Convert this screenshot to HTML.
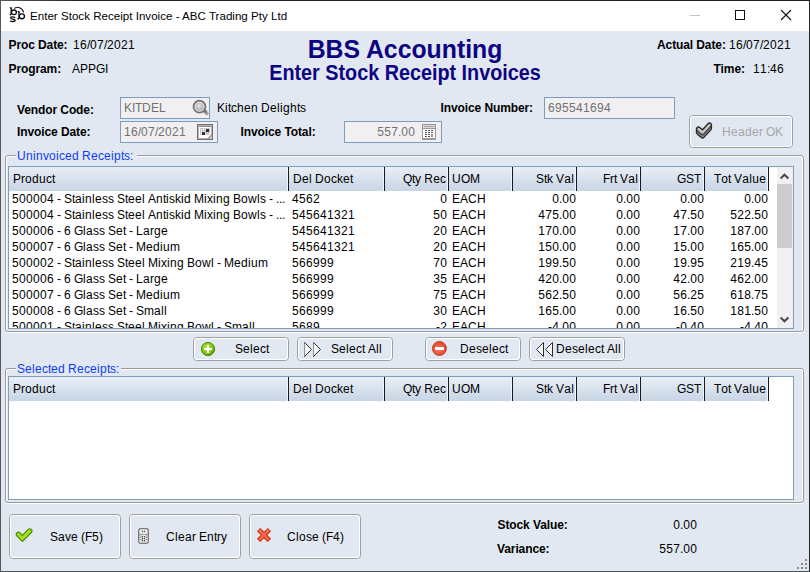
<!DOCTYPE html>
<html><head><meta charset="utf-8">
<style>
html,body{margin:0;padding:0;}
body{width:810px;height:572px;overflow:hidden;position:relative;background:#E2E8F1;font-family:"Liberation Sans",sans-serif;font-size:12px;color:#000;}
.a{position:absolute;white-space:pre;line-height:14px;}
i{font-style:normal;display:inline-block;}
.w1{width:1px}.w2{width:2px}.w3{width:3px}.w4{width:4px}.w5{width:5px}.w6{width:6px}.w7{width:7px}.w8{width:8px}.w9{width:9px}.w10{width:10px}.w11{width:11px}.w12{width:12px}.w13{width:13px}.w14{width:14px}.w15{width:15px}
</style></head><body>
<div style="position:absolute;left:1px;top:1px;width:808px;height:30px;background:#fff"></div>
<div style="position:absolute;left:0px;top:0px;width:810px;height:1px;background:linear-gradient(90deg,#5a5a5a,#222 10%,#1e1e1e)"></div>
<div style="position:absolute;left:0px;top:571px;width:810px;height:1px;background:#505050"></div>
<div style="position:absolute;left:0px;top:0px;width:1px;height:572px;background:#585858"></div>
<div style="position:absolute;left:809px;top:0px;width:1px;height:572px;background:#262626"></div>
<div class="a" style="left:30px;top:9px;font-size:11.6px;">Enter Stock Receipt Invoice - ABC Trading Pty Ltd</div>
<div style="position:absolute;left:690px;top:15px;width:10px;height:1px;background:#c4c4c4"></div>
<div style="position:absolute;left:735px;top:10px;width:10px;height:10px;border:1px solid #111;box-sizing:border-box"></div>
<div class="a" style="left:8.5px;top:38px;font-weight:bold;letter-spacing:-0.1px;">Proc Date:</div>
<div class="a" style="left:73px;top:38px;"><i class="w7">1</i><i class="w7">6</i><i class="w3">/</i><i class="w7">0</i><i class="w7">7</i><i class="w3">/</i><i class="w7">2</i><i class="w7">0</i><i class="w7">2</i><i class="w7">1</i></div>
<div class="a" style="left:8.5px;top:62px;font-weight:bold;letter-spacing:-0.1px;">Program:</div>
<div class="a" style="left:72px;top:62px;"><i class="w8">A</i><i class="w8">P</i><i class="w8">P</i><i class="w9">G</i><i class="w3">I</i></div>
<div class="a" style="left:0;width:810px;text-align:center;top:35px;font-size:24.8px;line-height:30px;font-weight:bold;color:#0C0482;transform:scaleY(1.06);transform-origin:50% 23px">BBS Accounting</div>
<div class="a" style="left:0;width:810px;text-align:center;top:61px;font-size:19.8px;line-height:24px;font-weight:bold;color:#0C0482;transform:scaleY(1.07);transform-origin:50% 19px">Enter Stock Receipt Invoices</div>
<div class="a" style="left:657px;top:38px;font-weight:bold;letter-spacing:-0.1px;">Actual Date:</div>
<div class="a" style="left:729px;top:38px;"><i class="w7">1</i><i class="w7">6</i><i class="w3">/</i><i class="w7">0</i><i class="w7">7</i><i class="w3">/</i><i class="w7">2</i><i class="w7">0</i><i class="w7">2</i><i class="w7">1</i></div>
<div class="a" style="left:713.6px;top:62px;font-weight:bold;letter-spacing:-0.1px;">Time:</div>
<div class="a" style="left:753px;top:62px;"><i class="w7">1</i><i class="w7">1</i><i class="w3">:</i><i class="w7">4</i><i class="w7">6</i></div>
<div class="a" style="left:17px;top:103px;font-weight:bold;letter-spacing:-0.1px;">Vendor Code:</div>
<div style="position:absolute;left:120px;top:97px;width:90px;height:22px;background:#F0F0F0;border:1px solid #7F9DB9;box-sizing:border-box"></div>
<div class="a" style="left:124px;top:101px;color:#707070;"><i class="w8">K</i><i class="w3">I</i><i class="w7">T</i><i class="w9">D</i><i class="w8">E</i><i class="w7">L</i></div>
<div class="a" style="left:217px;top:101px;"><i class="w8">K</i><i class="w3">i</i><i class="w3">t</i><i class="w6">c</i><i class="w7">h</i><i class="w7">e</i><i class="w7">n</i><i class="w3"> </i><i class="w9">D</i><i class="w7">e</i><i class="w3">l</i><i class="w3">i</i><i class="w7">g</i><i class="w7">h</i><i class="w3">t</i><i class="w6">s</i></div>
<div class="a" style="left:440.5px;top:101px;font-weight:bold;letter-spacing:-0.1px;">Invoice Number:</div>
<div style="position:absolute;left:544px;top:97px;width:131px;height:22px;background:#F0F0F0;border:1px solid #7F9DB9;box-sizing:border-box"></div>
<div class="a" style="left:548px;top:101px;color:#707070;"><i class="w7">6</i><i class="w7">9</i><i class="w7">5</i><i class="w7">5</i><i class="w7">4</i><i class="w7">1</i><i class="w7">6</i><i class="w7">9</i><i class="w7">4</i></div>
<div class="a" style="left:17px;top:125px;font-weight:bold;letter-spacing:-0.1px;">Invoice Date:</div>
<div style="position:absolute;left:120px;top:121px;width:98px;height:22px;background:#F0F0F0;border:1px solid #7F9DB9;box-sizing:border-box"></div>
<div class="a" style="left:124px;top:125px;color:#707070;"><i class="w7">1</i><i class="w7">6</i><i class="w3">/</i><i class="w7">0</i><i class="w7">7</i><i class="w3">/</i><i class="w7">2</i><i class="w7">0</i><i class="w7">2</i><i class="w7">1</i></div>
<div class="a" style="left:240.5px;top:125px;font-weight:bold;letter-spacing:-0.1px;">Invoice Total:</div>
<div style="position:absolute;left:344px;top:121px;width:98px;height:22px;background:#F0F0F0;border:1px solid #7F9DB9;box-sizing:border-box"></div>
<div class="a" style="right:395px;top:125px;text-align:right;color:#707070;"><i class="w7">5</i><i class="w7">5</i><i class="w7">7</i><i class="w3">.</i><i class="w7">0</i><i class="w7">0</i></div>
<div style="position:absolute;left:689px;top:115px;width:104px;height:33px;border:1px solid #A0A0A0;border-radius:4px;box-sizing:border-box"></div>
<div style="position:absolute;left:690px;top:116px;width:102px;height:31px;border:1px solid #FFFFFF;border-radius:3px;box-sizing:border-box"></div>
<div class="a" style="left:722px;top:125px;color:#A6A6A6;"><i class="w9">H</i><i class="w7">e</i><i class="w7">a</i><i class="w7">d</i><i class="w7">e</i><i class="w4">r</i><i class="w3"> </i><i class="w9">O</i><i class="w8">K</i></div>
<div style="position:absolute;left:5px;top:155px;width:799px;height:177px;border:1px solid #9A9A9A;border-radius:3px;box-sizing:border-box"></div>
<div style="position:absolute;left:6px;top:157px;width:1px;height:173px;background:#fff"></div>
<div style="position:absolute;left:7px;top:156px;width:795px;height:1px;background:#fff"></div>
<div style="position:absolute;left:802px;top:157px;width:1px;height:173px;background:#fff"></div>
<div style="position:absolute;left:7px;top:332px;width:796px;height:1px;background:#fff"></div>
<div style="position:absolute;left:16px;top:154px;width:121px;height:3px;background:#E2E8F1"></div>
<div class="a" style="left:17px;top:149px;color:#0F3CF0;"><i class="w9">U</i><i class="w7">n</i><i class="w3">i</i><i class="w7">n</i><i class="w6">v</i><i class="w7">o</i><i class="w3">i</i><i class="w6">c</i><i class="w7">e</i><i class="w7">d</i><i class="w3"> </i><i class="w9">R</i><i class="w7">e</i><i class="w6">c</i><i class="w7">e</i><i class="w3">i</i><i class="w7">p</i><i class="w3">t</i><i class="w6">s</i><i class="w3">:</i></div>
<div style="position:absolute;left:5px;top:368px;width:799px;height:135px;border:1px solid #9A9A9A;border-radius:3px;box-sizing:border-box"></div>
<div style="position:absolute;left:6px;top:370px;width:1px;height:131px;background:#fff"></div>
<div style="position:absolute;left:7px;top:369px;width:795px;height:1px;background:#fff"></div>
<div style="position:absolute;left:802px;top:370px;width:1px;height:131px;background:#fff"></div>
<div style="position:absolute;left:7px;top:503px;width:796px;height:1px;background:#fff"></div>
<div style="position:absolute;left:16px;top:367px;width:105px;height:3px;background:#E2E8F1"></div>
<div class="a" style="left:17px;top:362px;color:#0F3CF0;"><i class="w8">S</i><i class="w7">e</i><i class="w3">l</i><i class="w7">e</i><i class="w6">c</i><i class="w3">t</i><i class="w7">e</i><i class="w7">d</i><i class="w3"> </i><i class="w9">R</i><i class="w7">e</i><i class="w6">c</i><i class="w7">e</i><i class="w3">i</i><i class="w7">p</i><i class="w3">t</i><i class="w6">s</i><i class="w3">:</i></div>
<div style="position:absolute;left:8px;top:166px;width:786px;height:163px;background:#fff;border:1px solid #7F9DB9;box-sizing:border-box"></div>
<div style="position:absolute;left:9px;top:167px;width:768px;height:161px;overflow:hidden">
<div style="position:absolute;left:-9px;top:-167px;width:810px;height:572px">
<div style="position:absolute;left:9px;top:167px;width:760px;height:24px;background:linear-gradient(#E9EEF5,#C7D5E6)"></div>
<div style="position:absolute;left:287px;top:167px;width:1px;height:24px;background:#F2F5FA"></div>
<div style="position:absolute;left:288px;top:167px;width:1px;height:24px;background:#1a1a1a"></div>
<div style="position:absolute;left:383px;top:167px;width:1px;height:24px;background:#F2F5FA"></div>
<div style="position:absolute;left:384px;top:167px;width:1px;height:24px;background:#1a1a1a"></div>
<div style="position:absolute;left:447px;top:167px;width:1px;height:24px;background:#F2F5FA"></div>
<div style="position:absolute;left:448px;top:167px;width:1px;height:24px;background:#1a1a1a"></div>
<div style="position:absolute;left:511px;top:167px;width:1px;height:24px;background:#F2F5FA"></div>
<div style="position:absolute;left:512px;top:167px;width:1px;height:24px;background:#1a1a1a"></div>
<div style="position:absolute;left:575px;top:167px;width:1px;height:24px;background:#F2F5FA"></div>
<div style="position:absolute;left:576px;top:167px;width:1px;height:24px;background:#1a1a1a"></div>
<div style="position:absolute;left:639px;top:167px;width:1px;height:24px;background:#F2F5FA"></div>
<div style="position:absolute;left:640px;top:167px;width:1px;height:24px;background:#1a1a1a"></div>
<div style="position:absolute;left:703px;top:167px;width:1px;height:24px;background:#F2F5FA"></div>
<div style="position:absolute;left:704px;top:167px;width:1px;height:24px;background:#1a1a1a"></div>
<div style="position:absolute;left:767px;top:167px;width:1px;height:24px;background:#F2F5FA"></div>
<div style="position:absolute;left:768px;top:167px;width:1px;height:24px;background:#1a1a1a"></div>
<div class="a" style="left:13px;top:172px;"><i class="w8">P</i><i class="w4">r</i><i class="w7">o</i><i class="w7">d</i><i class="w7">u</i><i class="w6">c</i><i class="w3">t</i></div>
<div class="a" style="left:293px;top:172px;"><i class="w9">D</i><i class="w7">e</i><i class="w3">l</i><i class="w3"> </i><i class="w9">D</i><i class="w7">o</i><i class="w6">c</i><i class="w6">k</i><i class="w7">e</i><i class="w3">t</i></div>
<div class="a" style="right:364px;top:172px;text-align:right;"><i class="w9">Q</i><i class="w3">t</i><i class="w6">y</i><i class="w3"> </i><i class="w9">R</i><i class="w7">e</i><i class="w6">c</i></div>
<div class="a" style="left:452px;top:172px;"><i class="w9">U</i><i class="w9">O</i><i class="w10">M</i></div>
<div class="a" style="right:236px;top:172px;text-align:right;"><i class="w8">S</i><i class="w3">t</i><i class="w6">k</i><i class="w3"> </i><i class="w8">V</i><i class="w7">a</i><i class="w3">l</i></div>
<div class="a" style="right:172px;top:172px;text-align:right;"><i class="w7">F</i><i class="w4">r</i><i class="w3">t</i><i class="w3"> </i><i class="w8">V</i><i class="w7">a</i><i class="w3">l</i></div>
<div class="a" style="right:109px;top:172px;text-align:right;"><i class="w9">G</i><i class="w8">S</i><i class="w7">T</i></div>
<div class="a" style="right:44px;top:172px;text-align:right;"><i class="w7">T</i><i class="w7">o</i><i class="w3">t</i><i class="w3"> </i><i class="w8">V</i><i class="w7">a</i><i class="w3">l</i><i class="w7">u</i><i class="w7">e</i></div>
<div class="a" style="left:12px;top:192px;"><i class="w7">5</i><i class="w7">0</i><i class="w7">0</i><i class="w7">0</i><i class="w7">0</i><i class="w7">4</i><i class="w3"> </i><i class="w4">-</i><i class="w3"> </i><i class="w8">S</i><i class="w3">t</i><i class="w7">a</i><i class="w3">i</i><i class="w7">n</i><i class="w3">l</i><i class="w7">e</i><i class="w6">s</i><i class="w6">s</i><i class="w3"> </i><i class="w8">S</i><i class="w3">t</i><i class="w7">e</i><i class="w7">e</i><i class="w3">l</i><i class="w3"> </i><i class="w8">A</i><i class="w7">n</i><i class="w3">t</i><i class="w3">i</i><i class="w6">s</i><i class="w6">k</i><i class="w3">i</i><i class="w7">d</i><i class="w3"> </i><i class="w10">M</i><i class="w3">i</i><i class="w6">x</i><i class="w3">i</i><i class="w7">n</i><i class="w7">g</i><i class="w3"> </i><i class="w8">B</i><i class="w7">o</i><i class="w9">w</i><i class="w3">l</i><i class="w6">s</i><i class="w3"> </i><i class="w4">-</i><i class="w3"> </i><i class="w3">.</i><i class="w3">.</i><i class="w3">.</i></div>
<div class="a" style="left:292px;top:192px;"><i class="w7">4</i><i class="w7">5</i><i class="w7">6</i><i class="w7">2</i></div>
<div class="a" style="right:363px;top:192px;text-align:right;"><i class="w7">0</i></div>
<div class="a" style="left:452px;top:192px;"><i class="w8">E</i><i class="w8">A</i><i class="w9">C</i><i class="w9">H</i></div>
<div class="a" style="right:234px;top:192px;text-align:right;"><i class="w7">0</i><i class="w3">.</i><i class="w7">0</i><i class="w7">0</i></div>
<div class="a" style="right:170px;top:192px;text-align:right;"><i class="w7">0</i><i class="w3">.</i><i class="w7">0</i><i class="w7">0</i></div>
<div class="a" style="right:106px;top:192px;text-align:right;"><i class="w7">0</i><i class="w3">.</i><i class="w7">0</i><i class="w7">0</i></div>
<div class="a" style="right:42px;top:192px;text-align:right;"><i class="w7">0</i><i class="w3">.</i><i class="w7">0</i><i class="w7">0</i></div>
<div class="a" style="left:12px;top:208px;"><i class="w7">5</i><i class="w7">0</i><i class="w7">0</i><i class="w7">0</i><i class="w7">0</i><i class="w7">4</i><i class="w3"> </i><i class="w4">-</i><i class="w3"> </i><i class="w8">S</i><i class="w3">t</i><i class="w7">a</i><i class="w3">i</i><i class="w7">n</i><i class="w3">l</i><i class="w7">e</i><i class="w6">s</i><i class="w6">s</i><i class="w3"> </i><i class="w8">S</i><i class="w3">t</i><i class="w7">e</i><i class="w7">e</i><i class="w3">l</i><i class="w3"> </i><i class="w8">A</i><i class="w7">n</i><i class="w3">t</i><i class="w3">i</i><i class="w6">s</i><i class="w6">k</i><i class="w3">i</i><i class="w7">d</i><i class="w3"> </i><i class="w10">M</i><i class="w3">i</i><i class="w6">x</i><i class="w3">i</i><i class="w7">n</i><i class="w7">g</i><i class="w3"> </i><i class="w8">B</i><i class="w7">o</i><i class="w9">w</i><i class="w3">l</i><i class="w6">s</i><i class="w3"> </i><i class="w4">-</i><i class="w3"> </i><i class="w3">.</i><i class="w3">.</i><i class="w3">.</i></div>
<div class="a" style="left:292px;top:208px;"><i class="w7">5</i><i class="w7">4</i><i class="w7">5</i><i class="w7">6</i><i class="w7">4</i><i class="w7">1</i><i class="w7">3</i><i class="w7">2</i><i class="w7">1</i></div>
<div class="a" style="right:363px;top:208px;text-align:right;"><i class="w7">5</i><i class="w7">0</i></div>
<div class="a" style="left:452px;top:208px;"><i class="w8">E</i><i class="w8">A</i><i class="w9">C</i><i class="w9">H</i></div>
<div class="a" style="right:234px;top:208px;text-align:right;"><i class="w7">4</i><i class="w7">7</i><i class="w7">5</i><i class="w3">.</i><i class="w7">0</i><i class="w7">0</i></div>
<div class="a" style="right:170px;top:208px;text-align:right;"><i class="w7">0</i><i class="w3">.</i><i class="w7">0</i><i class="w7">0</i></div>
<div class="a" style="right:106px;top:208px;text-align:right;"><i class="w7">4</i><i class="w7">7</i><i class="w3">.</i><i class="w7">5</i><i class="w7">0</i></div>
<div class="a" style="right:42px;top:208px;text-align:right;"><i class="w7">5</i><i class="w7">2</i><i class="w7">2</i><i class="w3">.</i><i class="w7">5</i><i class="w7">0</i></div>
<div class="a" style="left:12px;top:224px;"><i class="w7">5</i><i class="w7">0</i><i class="w7">0</i><i class="w7">0</i><i class="w7">0</i><i class="w7">6</i><i class="w3"> </i><i class="w4">-</i><i class="w3"> </i><i class="w7">6</i><i class="w3"> </i><i class="w9">G</i><i class="w3">l</i><i class="w7">a</i><i class="w6">s</i><i class="w6">s</i><i class="w3"> </i><i class="w8">S</i><i class="w7">e</i><i class="w3">t</i><i class="w3"> </i><i class="w4">-</i><i class="w3"> </i><i class="w7">L</i><i class="w7">a</i><i class="w4">r</i><i class="w7">g</i><i class="w7">e</i></div>
<div class="a" style="left:292px;top:224px;"><i class="w7">5</i><i class="w7">4</i><i class="w7">5</i><i class="w7">6</i><i class="w7">4</i><i class="w7">1</i><i class="w7">3</i><i class="w7">2</i><i class="w7">1</i></div>
<div class="a" style="right:363px;top:224px;text-align:right;"><i class="w7">2</i><i class="w7">0</i></div>
<div class="a" style="left:452px;top:224px;"><i class="w8">E</i><i class="w8">A</i><i class="w9">C</i><i class="w9">H</i></div>
<div class="a" style="right:234px;top:224px;text-align:right;"><i class="w7">1</i><i class="w7">7</i><i class="w7">0</i><i class="w3">.</i><i class="w7">0</i><i class="w7">0</i></div>
<div class="a" style="right:170px;top:224px;text-align:right;"><i class="w7">0</i><i class="w3">.</i><i class="w7">0</i><i class="w7">0</i></div>
<div class="a" style="right:106px;top:224px;text-align:right;"><i class="w7">1</i><i class="w7">7</i><i class="w3">.</i><i class="w7">0</i><i class="w7">0</i></div>
<div class="a" style="right:42px;top:224px;text-align:right;"><i class="w7">1</i><i class="w7">8</i><i class="w7">7</i><i class="w3">.</i><i class="w7">0</i><i class="w7">0</i></div>
<div class="a" style="left:12px;top:240px;"><i class="w7">5</i><i class="w7">0</i><i class="w7">0</i><i class="w7">0</i><i class="w7">0</i><i class="w7">7</i><i class="w3"> </i><i class="w4">-</i><i class="w3"> </i><i class="w7">6</i><i class="w3"> </i><i class="w9">G</i><i class="w3">l</i><i class="w7">a</i><i class="w6">s</i><i class="w6">s</i><i class="w3"> </i><i class="w8">S</i><i class="w7">e</i><i class="w3">t</i><i class="w3"> </i><i class="w4">-</i><i class="w3"> </i><i class="w10">M</i><i class="w7">e</i><i class="w7">d</i><i class="w3">i</i><i class="w7">u</i><i class="w10">m</i></div>
<div class="a" style="left:292px;top:240px;"><i class="w7">5</i><i class="w7">4</i><i class="w7">5</i><i class="w7">6</i><i class="w7">4</i><i class="w7">1</i><i class="w7">3</i><i class="w7">2</i><i class="w7">1</i></div>
<div class="a" style="right:363px;top:240px;text-align:right;"><i class="w7">2</i><i class="w7">0</i></div>
<div class="a" style="left:452px;top:240px;"><i class="w8">E</i><i class="w8">A</i><i class="w9">C</i><i class="w9">H</i></div>
<div class="a" style="right:234px;top:240px;text-align:right;"><i class="w7">1</i><i class="w7">5</i><i class="w7">0</i><i class="w3">.</i><i class="w7">0</i><i class="w7">0</i></div>
<div class="a" style="right:170px;top:240px;text-align:right;"><i class="w7">0</i><i class="w3">.</i><i class="w7">0</i><i class="w7">0</i></div>
<div class="a" style="right:106px;top:240px;text-align:right;"><i class="w7">1</i><i class="w7">5</i><i class="w3">.</i><i class="w7">0</i><i class="w7">0</i></div>
<div class="a" style="right:42px;top:240px;text-align:right;"><i class="w7">1</i><i class="w7">6</i><i class="w7">5</i><i class="w3">.</i><i class="w7">0</i><i class="w7">0</i></div>
<div class="a" style="left:12px;top:256px;"><i class="w7">5</i><i class="w7">0</i><i class="w7">0</i><i class="w7">0</i><i class="w7">0</i><i class="w7">2</i><i class="w3"> </i><i class="w4">-</i><i class="w3"> </i><i class="w8">S</i><i class="w3">t</i><i class="w7">a</i><i class="w3">i</i><i class="w7">n</i><i class="w3">l</i><i class="w7">e</i><i class="w6">s</i><i class="w6">s</i><i class="w3"> </i><i class="w8">S</i><i class="w3">t</i><i class="w7">e</i><i class="w7">e</i><i class="w3">l</i><i class="w3"> </i><i class="w10">M</i><i class="w3">i</i><i class="w6">x</i><i class="w3">i</i><i class="w7">n</i><i class="w7">g</i><i class="w3"> </i><i class="w8">B</i><i class="w7">o</i><i class="w9">w</i><i class="w3">l</i><i class="w3"> </i><i class="w4">-</i><i class="w3"> </i><i class="w10">M</i><i class="w7">e</i><i class="w7">d</i><i class="w3">i</i><i class="w7">u</i><i class="w10">m</i></div>
<div class="a" style="left:292px;top:256px;"><i class="w7">5</i><i class="w7">6</i><i class="w7">6</i><i class="w7">9</i><i class="w7">9</i><i class="w7">9</i></div>
<div class="a" style="right:363px;top:256px;text-align:right;"><i class="w7">7</i><i class="w7">0</i></div>
<div class="a" style="left:452px;top:256px;"><i class="w8">E</i><i class="w8">A</i><i class="w9">C</i><i class="w9">H</i></div>
<div class="a" style="right:234px;top:256px;text-align:right;"><i class="w7">1</i><i class="w7">9</i><i class="w7">9</i><i class="w3">.</i><i class="w7">5</i><i class="w7">0</i></div>
<div class="a" style="right:170px;top:256px;text-align:right;"><i class="w7">0</i><i class="w3">.</i><i class="w7">0</i><i class="w7">0</i></div>
<div class="a" style="right:106px;top:256px;text-align:right;"><i class="w7">1</i><i class="w7">9</i><i class="w3">.</i><i class="w7">9</i><i class="w7">5</i></div>
<div class="a" style="right:42px;top:256px;text-align:right;"><i class="w7">2</i><i class="w7">1</i><i class="w7">9</i><i class="w3">.</i><i class="w7">4</i><i class="w7">5</i></div>
<div class="a" style="left:12px;top:272px;"><i class="w7">5</i><i class="w7">0</i><i class="w7">0</i><i class="w7">0</i><i class="w7">0</i><i class="w7">6</i><i class="w3"> </i><i class="w4">-</i><i class="w3"> </i><i class="w7">6</i><i class="w3"> </i><i class="w9">G</i><i class="w3">l</i><i class="w7">a</i><i class="w6">s</i><i class="w6">s</i><i class="w3"> </i><i class="w8">S</i><i class="w7">e</i><i class="w3">t</i><i class="w3"> </i><i class="w4">-</i><i class="w3"> </i><i class="w7">L</i><i class="w7">a</i><i class="w4">r</i><i class="w7">g</i><i class="w7">e</i></div>
<div class="a" style="left:292px;top:272px;"><i class="w7">5</i><i class="w7">6</i><i class="w7">6</i><i class="w7">9</i><i class="w7">9</i><i class="w7">9</i></div>
<div class="a" style="right:363px;top:272px;text-align:right;"><i class="w7">3</i><i class="w7">5</i></div>
<div class="a" style="left:452px;top:272px;"><i class="w8">E</i><i class="w8">A</i><i class="w9">C</i><i class="w9">H</i></div>
<div class="a" style="right:234px;top:272px;text-align:right;"><i class="w7">4</i><i class="w7">2</i><i class="w7">0</i><i class="w3">.</i><i class="w7">0</i><i class="w7">0</i></div>
<div class="a" style="right:170px;top:272px;text-align:right;"><i class="w7">0</i><i class="w3">.</i><i class="w7">0</i><i class="w7">0</i></div>
<div class="a" style="right:106px;top:272px;text-align:right;"><i class="w7">4</i><i class="w7">2</i><i class="w3">.</i><i class="w7">0</i><i class="w7">0</i></div>
<div class="a" style="right:42px;top:272px;text-align:right;"><i class="w7">4</i><i class="w7">6</i><i class="w7">2</i><i class="w3">.</i><i class="w7">0</i><i class="w7">0</i></div>
<div class="a" style="left:12px;top:288px;"><i class="w7">5</i><i class="w7">0</i><i class="w7">0</i><i class="w7">0</i><i class="w7">0</i><i class="w7">7</i><i class="w3"> </i><i class="w4">-</i><i class="w3"> </i><i class="w7">6</i><i class="w3"> </i><i class="w9">G</i><i class="w3">l</i><i class="w7">a</i><i class="w6">s</i><i class="w6">s</i><i class="w3"> </i><i class="w8">S</i><i class="w7">e</i><i class="w3">t</i><i class="w3"> </i><i class="w4">-</i><i class="w3"> </i><i class="w10">M</i><i class="w7">e</i><i class="w7">d</i><i class="w3">i</i><i class="w7">u</i><i class="w10">m</i></div>
<div class="a" style="left:292px;top:288px;"><i class="w7">5</i><i class="w7">6</i><i class="w7">6</i><i class="w7">9</i><i class="w7">9</i><i class="w7">9</i></div>
<div class="a" style="right:363px;top:288px;text-align:right;"><i class="w7">7</i><i class="w7">5</i></div>
<div class="a" style="left:452px;top:288px;"><i class="w8">E</i><i class="w8">A</i><i class="w9">C</i><i class="w9">H</i></div>
<div class="a" style="right:234px;top:288px;text-align:right;"><i class="w7">5</i><i class="w7">6</i><i class="w7">2</i><i class="w3">.</i><i class="w7">5</i><i class="w7">0</i></div>
<div class="a" style="right:170px;top:288px;text-align:right;"><i class="w7">0</i><i class="w3">.</i><i class="w7">0</i><i class="w7">0</i></div>
<div class="a" style="right:106px;top:288px;text-align:right;"><i class="w7">5</i><i class="w7">6</i><i class="w3">.</i><i class="w7">2</i><i class="w7">5</i></div>
<div class="a" style="right:42px;top:288px;text-align:right;"><i class="w7">6</i><i class="w7">1</i><i class="w7">8</i><i class="w3">.</i><i class="w7">7</i><i class="w7">5</i></div>
<div class="a" style="left:12px;top:304px;"><i class="w7">5</i><i class="w7">0</i><i class="w7">0</i><i class="w7">0</i><i class="w7">0</i><i class="w7">8</i><i class="w3"> </i><i class="w4">-</i><i class="w3"> </i><i class="w7">6</i><i class="w3"> </i><i class="w9">G</i><i class="w3">l</i><i class="w7">a</i><i class="w6">s</i><i class="w6">s</i><i class="w3"> </i><i class="w8">S</i><i class="w7">e</i><i class="w3">t</i><i class="w3"> </i><i class="w4">-</i><i class="w3"> </i><i class="w8">S</i><i class="w10">m</i><i class="w7">a</i><i class="w3">l</i><i class="w3">l</i></div>
<div class="a" style="left:292px;top:304px;"><i class="w7">5</i><i class="w7">6</i><i class="w7">6</i><i class="w7">9</i><i class="w7">9</i><i class="w7">9</i></div>
<div class="a" style="right:363px;top:304px;text-align:right;"><i class="w7">3</i><i class="w7">0</i></div>
<div class="a" style="left:452px;top:304px;"><i class="w8">E</i><i class="w8">A</i><i class="w9">C</i><i class="w9">H</i></div>
<div class="a" style="right:234px;top:304px;text-align:right;"><i class="w7">1</i><i class="w7">6</i><i class="w7">5</i><i class="w3">.</i><i class="w7">0</i><i class="w7">0</i></div>
<div class="a" style="right:170px;top:304px;text-align:right;"><i class="w7">0</i><i class="w3">.</i><i class="w7">0</i><i class="w7">0</i></div>
<div class="a" style="right:106px;top:304px;text-align:right;"><i class="w7">1</i><i class="w7">6</i><i class="w3">.</i><i class="w7">5</i><i class="w7">0</i></div>
<div class="a" style="right:42px;top:304px;text-align:right;"><i class="w7">1</i><i class="w7">8</i><i class="w7">1</i><i class="w3">.</i><i class="w7">5</i><i class="w7">0</i></div>
<div class="a" style="left:12px;top:320px;"><i class="w7">5</i><i class="w7">0</i><i class="w7">0</i><i class="w7">0</i><i class="w7">0</i><i class="w7">1</i><i class="w3"> </i><i class="w4">-</i><i class="w3"> </i><i class="w8">S</i><i class="w3">t</i><i class="w7">a</i><i class="w3">i</i><i class="w7">n</i><i class="w3">l</i><i class="w7">e</i><i class="w6">s</i><i class="w6">s</i><i class="w3"> </i><i class="w8">S</i><i class="w3">t</i><i class="w7">e</i><i class="w7">e</i><i class="w3">l</i><i class="w3"> </i><i class="w10">M</i><i class="w3">i</i><i class="w6">x</i><i class="w3">i</i><i class="w7">n</i><i class="w7">g</i><i class="w3"> </i><i class="w8">B</i><i class="w7">o</i><i class="w9">w</i><i class="w3">l</i><i class="w3"> </i><i class="w4">-</i><i class="w3"> </i><i class="w8">S</i><i class="w10">m</i><i class="w7">a</i><i class="w3">l</i><i class="w3">l</i></div>
<div class="a" style="left:292px;top:320px;"><i class="w7">5</i><i class="w7">6</i><i class="w7">8</i><i class="w7">9</i></div>
<div class="a" style="right:363px;top:320px;text-align:right;"><i class="w4">-</i><i class="w7">2</i></div>
<div class="a" style="left:452px;top:320px;"><i class="w8">E</i><i class="w8">A</i><i class="w9">C</i><i class="w9">H</i></div>
<div class="a" style="right:234px;top:320px;text-align:right;"><i class="w4">-</i><i class="w7">4</i><i class="w3">.</i><i class="w7">0</i><i class="w7">0</i></div>
<div class="a" style="right:170px;top:320px;text-align:right;"><i class="w7">0</i><i class="w3">.</i><i class="w7">0</i><i class="w7">0</i></div>
<div class="a" style="right:106px;top:320px;text-align:right;"><i class="w4">-</i><i class="w7">0</i><i class="w3">.</i><i class="w7">4</i><i class="w7">0</i></div>
<div class="a" style="right:42px;top:320px;text-align:right;"><i class="w4">-</i><i class="w7">4</i><i class="w3">.</i><i class="w7">4</i><i class="w7">0</i></div>
</div></div>
<div style="position:absolute;left:777px;top:167px;width:16px;height:161px;background:#F0F0F0"></div>
<div style="position:absolute;left:777px;top:184px;width:15px;height:64px;background:#CDCDCD"></div>
<div style="position:absolute;left:8px;top:376px;width:786px;height:124px;background:#fff;border:1px solid #7F9DB9;box-sizing:border-box"></div>
<div style="position:absolute;left:9px;top:377px;width:768px;height:122px;overflow:hidden">
<div style="position:absolute;left:-9px;top:-377px;width:810px;height:572px">
<div style="position:absolute;left:9px;top:377px;width:760px;height:24px;background:linear-gradient(#E9EEF5,#C7D5E6)"></div>
<div style="position:absolute;left:287px;top:377px;width:1px;height:24px;background:#F2F5FA"></div>
<div style="position:absolute;left:288px;top:377px;width:1px;height:24px;background:#1a1a1a"></div>
<div style="position:absolute;left:383px;top:377px;width:1px;height:24px;background:#F2F5FA"></div>
<div style="position:absolute;left:384px;top:377px;width:1px;height:24px;background:#1a1a1a"></div>
<div style="position:absolute;left:447px;top:377px;width:1px;height:24px;background:#F2F5FA"></div>
<div style="position:absolute;left:448px;top:377px;width:1px;height:24px;background:#1a1a1a"></div>
<div style="position:absolute;left:511px;top:377px;width:1px;height:24px;background:#F2F5FA"></div>
<div style="position:absolute;left:512px;top:377px;width:1px;height:24px;background:#1a1a1a"></div>
<div style="position:absolute;left:575px;top:377px;width:1px;height:24px;background:#F2F5FA"></div>
<div style="position:absolute;left:576px;top:377px;width:1px;height:24px;background:#1a1a1a"></div>
<div style="position:absolute;left:639px;top:377px;width:1px;height:24px;background:#F2F5FA"></div>
<div style="position:absolute;left:640px;top:377px;width:1px;height:24px;background:#1a1a1a"></div>
<div style="position:absolute;left:703px;top:377px;width:1px;height:24px;background:#F2F5FA"></div>
<div style="position:absolute;left:704px;top:377px;width:1px;height:24px;background:#1a1a1a"></div>
<div style="position:absolute;left:767px;top:377px;width:1px;height:24px;background:#F2F5FA"></div>
<div style="position:absolute;left:768px;top:377px;width:1px;height:24px;background:#1a1a1a"></div>
<div class="a" style="left:13px;top:382px;"><i class="w8">P</i><i class="w4">r</i><i class="w7">o</i><i class="w7">d</i><i class="w7">u</i><i class="w6">c</i><i class="w3">t</i></div>
<div class="a" style="left:293px;top:382px;"><i class="w9">D</i><i class="w7">e</i><i class="w3">l</i><i class="w3"> </i><i class="w9">D</i><i class="w7">o</i><i class="w6">c</i><i class="w6">k</i><i class="w7">e</i><i class="w3">t</i></div>
<div class="a" style="right:364px;top:382px;text-align:right;"><i class="w9">Q</i><i class="w3">t</i><i class="w6">y</i><i class="w3"> </i><i class="w9">R</i><i class="w7">e</i><i class="w6">c</i></div>
<div class="a" style="left:452px;top:382px;"><i class="w9">U</i><i class="w9">O</i><i class="w10">M</i></div>
<div class="a" style="right:236px;top:382px;text-align:right;"><i class="w8">S</i><i class="w3">t</i><i class="w6">k</i><i class="w3"> </i><i class="w8">V</i><i class="w7">a</i><i class="w3">l</i></div>
<div class="a" style="right:172px;top:382px;text-align:right;"><i class="w7">F</i><i class="w4">r</i><i class="w3">t</i><i class="w3"> </i><i class="w8">V</i><i class="w7">a</i><i class="w3">l</i></div>
<div class="a" style="right:109px;top:382px;text-align:right;"><i class="w9">G</i><i class="w8">S</i><i class="w7">T</i></div>
<div class="a" style="right:44px;top:382px;text-align:right;"><i class="w7">T</i><i class="w7">o</i><i class="w3">t</i><i class="w3"> </i><i class="w8">V</i><i class="w7">a</i><i class="w3">l</i><i class="w7">u</i><i class="w7">e</i></div>
</div></div>
<div style="position:absolute;left:193px;top:337px;width:96px;height:24px;border:1px solid #A0A0A0;border-radius:4px;box-sizing:border-box"></div>
<div style="position:absolute;left:194px;top:338px;width:94px;height:22px;border:1px solid #FFFFFF;border-radius:3px;box-sizing:border-box"></div>
<div class="a" style="left:235px;top:342px;"><i class="w8">S</i><i class="w7">e</i><i class="w3">l</i><i class="w7">e</i><i class="w6">c</i><i class="w3">t</i></div>
<div style="position:absolute;left:297px;top:337px;width:96px;height:24px;border:1px solid #A0A0A0;border-radius:4px;box-sizing:border-box"></div>
<div style="position:absolute;left:298px;top:338px;width:94px;height:22px;border:1px solid #FFFFFF;border-radius:3px;box-sizing:border-box"></div>
<div class="a" style="left:331px;top:342px;"><i class="w8">S</i><i class="w7">e</i><i class="w3">l</i><i class="w7">e</i><i class="w6">c</i><i class="w3">t</i><i class="w3"> </i><i class="w8">A</i><i class="w3">l</i><i class="w3">l</i></div>
<div style="position:absolute;left:425px;top:337px;width:96px;height:24px;border:1px solid #A0A0A0;border-radius:4px;box-sizing:border-box"></div>
<div style="position:absolute;left:426px;top:338px;width:94px;height:22px;border:1px solid #FFFFFF;border-radius:3px;box-sizing:border-box"></div>
<div class="a" style="left:460px;top:342px;"><i class="w9">D</i><i class="w7">e</i><i class="w6">s</i><i class="w7">e</i><i class="w3">l</i><i class="w7">e</i><i class="w6">c</i><i class="w3">t</i></div>
<div style="position:absolute;left:529px;top:337px;width:96px;height:24px;border:1px solid #A0A0A0;border-radius:4px;box-sizing:border-box"></div>
<div style="position:absolute;left:530px;top:338px;width:94px;height:22px;border:1px solid #FFFFFF;border-radius:3px;box-sizing:border-box"></div>
<div class="a" style="left:556px;top:342px;"><i class="w9">D</i><i class="w7">e</i><i class="w6">s</i><i class="w7">e</i><i class="w3">l</i><i class="w7">e</i><i class="w6">c</i><i class="w3">t</i><i class="w3"> </i><i class="w8">A</i><i class="w3">l</i><i class="w3">l</i></div>
<div style="position:absolute;left:9px;top:514px;width:112px;height:45px;border:1px solid #A0A0A0;border-radius:4px;box-sizing:border-box"></div>
<div style="position:absolute;left:10px;top:515px;width:110px;height:43px;border:1px solid #FFFFFF;border-radius:3px;box-sizing:border-box"></div>
<div class="a" style="left:50px;top:530px;"><i class="w8">S</i><i class="w7">a</i><i class="w6">v</i><i class="w7">e</i><i class="w3"> </i><i class="w4">(</i><i class="w7">F</i><i class="w7">5</i><i class="w4">)</i></div>
<div style="position:absolute;left:129px;top:514px;width:112px;height:45px;border:1px solid #A0A0A0;border-radius:4px;box-sizing:border-box"></div>
<div style="position:absolute;left:130px;top:515px;width:110px;height:43px;border:1px solid #FFFFFF;border-radius:3px;box-sizing:border-box"></div>
<div class="a" style="left:166px;top:530px;"><i class="w9">C</i><i class="w3">l</i><i class="w7">e</i><i class="w7">a</i><i class="w4">r</i><i class="w3"> </i><i class="w8">E</i><i class="w7">n</i><i class="w3">t</i><i class="w4">r</i><i class="w6">y</i></div>
<div style="position:absolute;left:249px;top:514px;width:112px;height:45px;border:1px solid #A0A0A0;border-radius:4px;box-sizing:border-box"></div>
<div style="position:absolute;left:250px;top:515px;width:110px;height:43px;border:1px solid #FFFFFF;border-radius:3px;box-sizing:border-box"></div>
<div class="a" style="left:287px;top:530px;"><i class="w9">C</i><i class="w3">l</i><i class="w7">o</i><i class="w6">s</i><i class="w7">e</i><i class="w3"> </i><i class="w4">(</i><i class="w7">F</i><i class="w7">4</i><i class="w4">)</i></div>
<div class="a" style="left:497.5px;top:518px;font-weight:bold;letter-spacing:-0.1px;">Stock Value:</div>
<div class="a" style="right:113px;top:518px;text-align:right;"><i class="w7">0</i><i class="w3">.</i><i class="w7">0</i><i class="w7">0</i></div>
<div class="a" style="left:497px;top:542px;font-weight:bold;letter-spacing:-0.1px;">Variance:</div>
<div class="a" style="right:113px;top:542px;text-align:right;"><i class="w7">5</i><i class="w7">5</i><i class="w7">7</i><i class="w3">.</i><i class="w7">0</i><i class="w7">0</i></div>
<div style="position:absolute;left:805px;top:559px;width:2px;height:2px;background:#8a8a8a"></div>
<div style="position:absolute;left:801px;top:563px;width:2px;height:2px;background:#8a8a8a"></div>
<div style="position:absolute;left:805px;top:563px;width:2px;height:2px;background:#8a8a8a"></div>
<div style="position:absolute;left:797px;top:567px;width:2px;height:2px;background:#8a8a8a"></div>
<div style="position:absolute;left:801px;top:567px;width:2px;height:2px;background:#8a8a8a"></div>
<div style="position:absolute;left:805px;top:567px;width:2px;height:2px;background:#8a8a8a"></div>
<svg style="position:absolute;left:0;top:0" width="810" height="572" viewBox="0 0 810 572">
<g fill="none" stroke="#111" stroke-width="1.35">
<path d="M9.8 7.9 H11.2 V14.6 M9.6 14.6 H11.2"/><ellipse cx="13.9" cy="12.3" rx="2.5" ry="2.3"/>
<path d="M14.2 8.6 C16.5 6.2 21.5 6.6 23.7 12.4" stroke-width="1.1"/>
<path d="M17.6 11.6 H19 V18.7 M17.4 18.7 H19"/><ellipse cx="21.9" cy="16.3" rx="2.6" ry="2.4"/>
<path d="M15.2 17.6 Q13 16.3 10.8 17.2 Q10 18.6 12.7 19.1 Q15.5 19.6 15.1 20.8 Q13.6 22.1 10.1 21.1"/>
</g>
<path d="M781 10 L791 20 M791 10 L781 20" stroke="#111" stroke-width="1.1"/>
<defs><radialGradient id="lens" cx="0.45" cy="0.4" r="0.6"><stop offset="0" stop-color="#e8e8e8"/><stop offset="1" stop-color="#a8a8a8"/></radialGradient>
<linearGradient id="hnd" x1="0" y1="0" x2="1" y2="1"><stop offset="0" stop-color="#5e5e5e"/><stop offset="1" stop-color="#a8a8a8"/></linearGradient></defs>
<path d="M204.3 110.5 L207 113.5" stroke="url(#hnd)" stroke-width="3.4" stroke-linecap="round"/>
<circle cx="199.5" cy="106.7" r="5.9" fill="#fff" stroke="#767676" stroke-width="1.9"/>
<circle cx="199.5" cy="106.7" r="4.1" fill="url(#lens)"/>
<rect x="197.5" y="124.5" width="15" height="15" fill="#fff" stroke="#6e6e6e" stroke-width="1"/>
<rect x="198.5" y="125.5" width="13" height="13" fill="none" stroke="#b4b4b4" stroke-width="1"/>
<rect x="199" y="126" width="12" height="1" fill="#8a8a8a"/>
<rect x="200" y="128" width="10" height="7" fill="#c8c8c8"/>
<g fill="#fff"><rect x="201" y="129" width="1" height="1"/><rect x="203" y="129" width="1" height="1"/><rect x="205" y="129" width="1" height="1"/><rect x="201" y="131" width="1" height="1"/><rect x="203" y="131" width="1" height="1"/><rect x="201" y="133" width="1" height="1"/><rect x="205" y="133" width="1" height="1"/><rect x="209" y="133" width="1" height="1"/></g>
<rect x="202" y="132" width="3" height="3" fill="#333"/><rect x="206" y="129" width="3" height="3" fill="#333"/>
<path d="M207.5 139 L212 134.5 V139 Z" fill="#c4c4c4"/><path d="M207.5 139 L212 134.5" stroke="#777" stroke-width="1"/>
<rect x="422" y="124" width="14" height="16" fill="#9a9a9a"/>
<rect x="423" y="125" width="12" height="3" fill="#d8d8d8"/><rect x="424" y="126" width="10" height="1" fill="#a8a8a8"/>
<rect x="423" y="129" width="12" height="9" fill="#fbfbfb"/>
<g fill="#5a5a5a"><rect x="425" y="130" width="2" height="1"/><rect x="428" y="130" width="2" height="1"/><rect x="431" y="130" width="2" height="1"/>
<rect x="425" y="132" width="2" height="1"/><rect x="428" y="132" width="2" height="1"/><rect x="431" y="132" width="2" height="1"/>
<rect x="425" y="134" width="2" height="1"/><rect x="428" y="134" width="2" height="1"/>
<rect x="425" y="136" width="2" height="1"/><rect x="428" y="136" width="2" height="1"/></g>
<rect x="431" y="134" width="2" height="3" fill="#9a9a9a"/>
<g transform="translate(0,3.5)"><path d="M698.5 129 L702.5 132.5 L709.5 125" fill="none" stroke="#2a2a2a" stroke-width="5.2" stroke-linejoin="round" stroke-linecap="round"/></g>
<g transform="translate(0,2)"><path d="M698.5 129 L702.5 132.5 L709.5 125" fill="none" stroke="#2a2a2a" stroke-width="5.2" stroke-linejoin="round" stroke-linecap="round"/></g>
<path d="M698.5 129 L702.5 132.5 L709.5 125" fill="none" stroke="#2a2a2a" stroke-width="5.2" stroke-linejoin="round" stroke-linecap="round"/>
<g transform="translate(0,3.5)"><path d="M698.5 129 L702.5 132.5 L709.5 125" fill="none" stroke="#8a8a8a" stroke-width="2.6" stroke-linejoin="round" stroke-linecap="round"/></g>
<g transform="translate(0,2)"><path d="M698.5 129 L702.5 132.5 L709.5 125" fill="none" stroke="#8a8a8a" stroke-width="2.6" stroke-linejoin="round" stroke-linecap="round"/></g>
<path d="M698.5 129 L702.5 132.5 L709.5 125" fill="none" stroke="#2a2a2a" stroke-width="5.2" stroke-linejoin="round" stroke-linecap="round" transform="translate(0,0.6)" opacity="0.6"/>
<path d="M698.5 129 L702.5 132.5 L709.5 125" fill="none" stroke="#c8c8c8" stroke-width="2.4" stroke-linejoin="round" stroke-linecap="round"/>
<path d="M780.6 178.6 L784.5 174.7 L788.4 178.6" fill="none" stroke="#4a4a4a" stroke-width="2.1"/>
<path d="M780.6 317.4 L784.5 321.3 L788.4 317.4" fill="none" stroke="#4a4a4a" stroke-width="2.1"/>
<defs><radialGradient id="gg" cx="0.42" cy="0.38" r="0.65"><stop offset="0" stop-color="#B8E830"/><stop offset="0.7" stop-color="#80C010"/><stop offset="1" stop-color="#4E9A06"/></radialGradient>
<radialGradient id="rg" cx="0.45" cy="0.55" r="0.65"><stop offset="0" stop-color="#F87858"/><stop offset="0.7" stop-color="#E85034"/><stop offset="1" stop-color="#C83818"/></radialGradient></defs>
<circle cx="208" cy="349" r="6.6" fill="url(#gg)" stroke="#3F8A04" stroke-width="1"/>
<path d="M208 345 V353 M204 349 H212" stroke="#fff" stroke-width="2.2"/>
<path d="M304.5 342.5 L311.5 349.5 L304.5 356.5 Z M313.5 342.5 L320.5 349.5 L313.5 356.5 Z" fill="#f6f6f6" stroke="#2e2e2e" stroke-width="1" stroke-linejoin="round"/>
<path d="M304.5 343 V356 M313.5 343 V356" stroke="#909090" stroke-width="1"/>
<circle cx="439.4" cy="348.5" r="6.9" fill="url(#rg)" stroke="#C43414" stroke-width="1"/>
<rect x="435" y="347" width="9" height="3" fill="#fff"/>
<path d="M543.5 342.5 L536.5 349.5 L543.5 356.5 Z M552.5 342.5 L545.5 349.5 L552.5 356.5 Z" fill="#f6f6f6" stroke="#2e2e2e" stroke-width="1" stroke-linejoin="round"/>
<path d="M18.4 534.4 L22.4 538.4 L29.8 531" fill="none" stroke="#3C8A00" stroke-width="5.4" stroke-linejoin="miter" stroke-linecap="round"/>
<path d="M18.4 534.4 L22.4 538.4 L29.8 531" fill="none" stroke="#A6DC1E" stroke-width="3.2" stroke-linejoin="miter" stroke-linecap="round"/>
<rect x="138.5" y="528.5" width="10" height="15" rx="1.8" fill="#a8a8a8" stroke="#7a7a7a"/>
<rect x="139.6" y="529.6" width="7.8" height="4.2" rx="1.6" fill="#f2f2f2"/>
<rect x="139.6" y="535" width="7.8" height="7.6" rx="1" fill="#e6e6e6"/>
<g fill="#4a4a4a"><rect x="141.8" y="530.8" width="1.3" height="1.3"/><rect x="143.9" y="530.8" width="1.3" height="1.3"/>
<rect x="141.8" y="536" width="1.3" height="1.3"/><rect x="143.9" y="536" width="1.3" height="1.3"/>
<rect x="141.8" y="538" width="1.3" height="1.3"/><rect x="143.9" y="538" width="1.3" height="1.3"/>
<rect x="141.8" y="540" width="1.3" height="1.3"/><rect x="143.9" y="540" width="1.3" height="1.3"/></g>
<g fill="#8a8a8a"><rect x="140.2" y="537" width="1" height="1"/><rect x="146" y="537" width="1" height="1"/><rect x="140.2" y="539" width="1" height="1"/><rect x="146" y="539" width="1" height="1"/><rect x="140.2" y="535.5" width="1" height="1"/><rect x="146" y="535.5" width="1" height="1"/></g>
<path d="M260.3 531.3 L267.7 538.7 M267.7 531.3 L260.3 538.7" stroke="#C8300E" stroke-width="4.8" stroke-linecap="square"/>
<path d="M260.3 531.3 L267.7 538.7 M267.7 531.3 L260.3 538.7" stroke="#F26648" stroke-width="2.8" stroke-linecap="square"/>
<path d="M259.6 531.2 L261.2 529.8" stroke="#FFC8B8" stroke-width="0.9" opacity="0.8"/><path d="M266.8 529.8 L268.4 531.2" stroke="#FFC8B8" stroke-width="0.9" opacity="0.8"/>
</svg>
</body></html>
